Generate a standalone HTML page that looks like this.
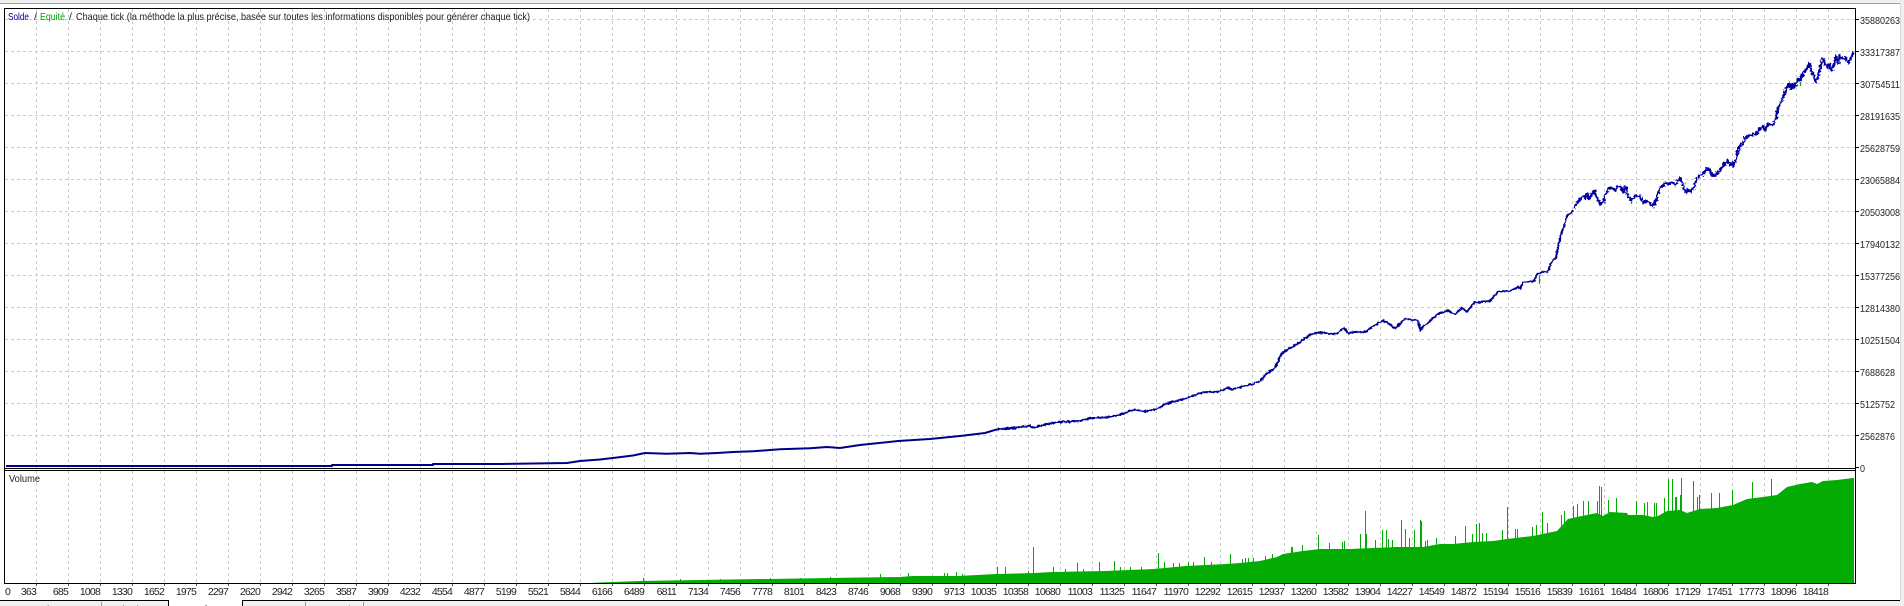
<!DOCTYPE html>
<html><head><meta charset="utf-8"><title>Graphique</title>
<style>
html,body{margin:0;padding:0;width:1904px;height:606px;overflow:hidden;background:#f0f0f0}
svg{display:block}
text{font-family:"Liberation Sans",sans-serif;font-size:10.5px;fill:#222}
</style></head><body>
<svg xmlns="http://www.w3.org/2000/svg" width="1904" height="606" viewBox="0 0 1904 606">
<defs>
<filter id="j1" filterUnits="userSpaceOnUse" x="0" y="0" width="1904" height="606" color-interpolation-filters="sRGB">
<feTurbulence type="fractalNoise" baseFrequency="0.35" numOctaves="2" seed="4" result="n"/>
<feDisplacementMap in="SourceGraphic" in2="n" scale="3" xChannelSelector="R" yChannelSelector="G"/>
</filter>
<filter id="j2" filterUnits="userSpaceOnUse" x="0" y="0" width="1904" height="606" color-interpolation-filters="sRGB">
<feTurbulence type="fractalNoise" baseFrequency="0.4" numOctaves="2" seed="9" result="n"/>
<feDisplacementMap in="SourceGraphic" in2="n" scale="5" xChannelSelector="R" yChannelSelector="G"/>
</filter>
</defs>
<rect x="0" y="0" width="1904" height="606" fill="#f0f0f0"/>
<rect x="0" y="4" width="1900" height="596" fill="#fff"/>
<rect x="0" y="3" width="1900" height="1" fill="#a0a0a0"/>
<rect x="1900" y="3" width="1" height="597" fill="#d8d8d8"/>

<!-- grid -->
<path shape-rendering="crispEdges" fill="none" stroke="#cacaca" stroke-dasharray="3 3" d="M5 19.5H1855M5 51.5H1855M5 83.5H1855M5 115.5H1855M5 147.5H1855M5 179.5H1855M5 211.5H1855M5 243.5H1855M5 275.5H1855M5 307.5H1855M5 339.5H1855M5 371.5H1855M5 403.5H1855M5 435.5H1855"/>
<path shape-rendering="crispEdges" fill="none" stroke="#cacaca" stroke-dasharray="3 3" d="M36.5 9V583M68.5 9V583M100.5 9V583M132.5 9V583M164.5 9V583M196.5 9V583M228.5 9V583M260.5 9V583M292.5 9V583M324.5 9V583M356.5 9V583M388.5 9V583M420.5 9V583M452.5 9V583M484.5 9V583M516.5 9V583M548.5 9V583M580.5 9V583M612.5 9V583M644.5 9V583M676.5 9V583M708.5 9V583M740.5 9V583M772.5 9V583M804.5 9V583M836.5 9V583M868.5 9V583M900.5 9V583M932.5 9V583M964.5 9V583M996.5 9V583M1028.5 9V583M1060.5 9V583M1092.5 9V583M1124.5 9V583M1156.5 9V583M1188.5 9V583M1220.5 9V583M1252.5 9V583M1284.5 9V583M1316.5 9V583M1348.5 9V583M1380.5 9V583M1412.5 9V583M1444.5 9V583M1476.5 9V583M1508.5 9V583M1540.5 9V583M1572.5 9V583M1604.5 9V583M1636.5 9V583M1668.5 9V583M1700.5 9V583M1732.5 9V583M1764.5 9V583M1796.5 9V583M1828.5 9V583"/>

<!-- volume area -->
<polygon fill="#03ab03" points="590,583 600,582.5 640,581 700,580 800,578.5 860,577.5 900,577 913,576 958,576 996,574 1034,573 1052,572 1105,571 1154,569 1186,566 1226,564 1240,563 1260,561 1277,557 1283,554 1303,551 1320,549 1340,549 1350,549 1373,548 1397,547 1423,547 1440,544 1453,544 1473,542 1493,541 1507,539 1533,536 1557,531 1568,519 1577,517 1597,513 1603,516 1610,512 1627,513 1628,515 1643,515 1653,517 1658,516 1667,511 1680,510 1687,513 1700,509 1717,508 1733,505 1747,499 1763,497 1777,495 1787,487 1800,484 1812,482 1817,484 1823,481 1837,480 1853,478 1854,478 1854,583"/>
<!-- volume spikes -->
<path shape-rendering="crispEdges" fill="none" stroke="#03ab03" d="M643.5 578V583M680.5 579V583M720.5 579V583M770.5 578V583M800.5 578V583M830.5 577V583M880.5 574V583
M908.5 573V583M944.5 573V583M947.5 573V583M956.5 572V583M962.5 574V583M997.5 567V583M1005.5 567V583M1028.5 571V583M1033.5 547V583M1053.5 567V583M1065.5 569V583M1077.5 563V583M1083.5 569V583M1099.5 562V583M1114.5 561V583M1120.5 567V583M1130.5 567V583M1141.5 567V583M1158.5 553V583M1164.5 562V583M1173.5 563V583M1179.5 563V583M1188.5 562V583M1193.5 562V583M1204.5 557V583M1211.5 562V583M1230.5 554V583
M1242.5 559V583M1245.5 558V583M1248.5 558V583M1253.5 558V583M1265.5 556V583M1272.5 554V583M1291.5 547V583M1292.5 547V583M1302.5 545V583M1318.5 535V583M1329.5 543V583M1342.5 542V583M1344.5 541V583M1360.5 534V583M1365.5 511V583M1366.5 534V583M1375.5 540V583M1382.5 530V583M1386.5 530V583M1388.5 539V583M1392.5 540V583M1401.5 520V583M1405.5 529V583M1409.5 538V583M1414.5 530V583M1420.5 520V583M1421.5 521V583M1425.5 541V583M1427.5 540V583M1436.5 538V583M1455.5 536V583M1465.5 526V583M1472.5 534V583M1476.5 524V583M1479.5 523V583M1482.5 533V583M1486.5 533V583M1502.5 530V583M1507.5 507V583M1515.5 529V583M1517.5 529V583M1532.5 527V583M1536.5 525V583M1542.5 512V583M1547.5 523V583M1561.5 515V583M1564.5 511V583M1573.5 506V583M1577.5 504V583M1583.5 501V583M1588.5 501V583M1597.5 501V583M1599.5 486V583M1601.5 487V583M1608.5 500V583M1616.5 498V583
M1636.5 501V583M1644.5 503V583M1647.5 502V583M1654.5 503V583M1656.5 503V583M1664.5 498V583M1668.5 479V583M1672.5 479V583M1675.5 497V583M1676.5 497V583M1680.5 495V583M1681.5 478V583M1693.5 481V583M1697.5 497V583M1699.5 495V583M1711.5 493V583M1719.5 493V583M1732.5 490V583M1752.5 482V583M1771.5 479V583"/>

<!-- equity glitches -->
<path fill="none" stroke="#1f9a1f" stroke-width="1.2" d="M1539.5 275V284M1631.5 198V204M1800.5 82V86"/>

<!-- balance curve -->
<polyline fill="none" stroke="#000088" stroke-width="2" stroke-linejoin="round" points="6,466 332,466 332,465 433,465 433,464 500,464 567,463 580,461 600,459.5 617,457.5 633,455.5 645,453 667,453.7 690,453 700,453.8 717,453 733,452 753,451.3 780,449.3 810,448.3 827,447 840,448 860,445 898,441 930,439 960,436 985,433 997,429.3"/>
<polyline filter="url(#j1)" fill="none" stroke="#00008f" stroke-width="2" stroke-linejoin="round" points="997,429.3 1003,428.7 1013,428 1030,425.7 1032,428 1047,424 1060,422 1080,421 1090,418.3 1107,417.3 1123,414 1133,409.7 1138,410 1142,411.7 1157,409.3 1165,404 1188,397.7 1203,392.3 1218,391.7 1228,388 1232,389.3 1253,384 1260,381 1268,372.3 1275,368.3 1280,356.7 1283.5,351.7 1290,348 1299,343 1308,336 1315,332.7 1325,333 1335,334.3 1344,328.3 1348,333 1357,331.7 1364,332.7 1370.5,328 1383,320.5 1388,323 1395,328.5 1405,318.7 1413,320 1418,320.7 1420.5,331 1422,328 1430,321 1438,314 1448,310.7 1455,314.3 1462,308 1467,311.7 1474,302.7 1480,302 1490,301 1498,291.7 1510,291 1518,287 1520,289 1523,282.3 1534,280.7 1537,274 1543,271.7 1547,272 1553,260 1556,258 1559,242 1565,223 1567,215.7 1573.6,211"/>
<polyline filter="url(#j2)" fill="none" stroke="#0000a0" stroke-width="2.4" stroke-linejoin="round" points="1574,208 1579,200 1583,196 1585,198 1587,194 1589,199 1594,191 1597,198 1600,204 1603,203 1605,195 1610,187 1615,190 1617,186 1621,187 1623,192 1626,186 1628,197 1632,200 1635,196 1640,196 1643,202 1647,201 1653,206 1655,203 1659,190 1665,183 1669,184 1672,182 1675,185 1680,177 1686,193 1688,189 1690,192 1694,187 1697,178 1703,174 1708,168 1713,176 1716,175 1723,166 1727,160 1730,165 1732,163 1734,166 1737,155 1739,147 1743,143 1747,136 1756,134 1762,126 1765,130 1768,124 1773,125 1776,119 1778,108 1783,98 1787,87 1789,83 1791,90 1792,84 1794,88 1798,79 1800,80 1803,74 1809,64 1816,82 1819,72 1823,59 1827,68 1829,64 1831,70 1833,68 1836,56 1838,64 1840,55 1843,59 1846,58 1848,63 1850,61 1853,52"/>

<!-- frames -->
<g shape-rendering="crispEdges" fill="#000">
<rect x="4" y="8" width="1852" height="1"/>
<rect x="4" y="8" width="1" height="576"/>
<rect x="1855" y="8" width="1" height="576"/>
<rect x="4" y="468" width="1852" height="1"/>
<rect x="4" y="470" width="1852" height="1"/>
<rect x="4" y="583" width="1852" height="1"/>
</g>
<rect x="5" y="469" width="1850" height="1" fill="#fff"/>
<!-- right ticks -->
<path shape-rendering="crispEdges" stroke="#000" d="M1856 19.5H1859M1856 51.5H1859M1856 83.5H1859M1856 115.5H1859M1856 147.5H1859M1856 179.5H1859M1856 211.5H1859M1856 243.5H1859M1856 275.5H1859M1856 307.5H1859M1856 339.5H1859M1856 371.5H1859M1856 403.5H1859M1856 435.5H1859M1856 467.5H1859"/>
<!-- bottom ticks -->
<path shape-rendering="crispEdges" stroke="#555" d="M36.5 584V586M68.5 584V586M100.5 584V586M132.5 584V586M164.5 584V586M196.5 584V586M228.5 584V586M260.5 584V586M292.5 584V586M324.5 584V586M356.5 584V586M388.5 584V586M420.5 584V586M452.5 584V586M484.5 584V586M516.5 584V586M548.5 584V586M580.5 584V586M612.5 584V586M644.5 584V586M676.5 584V586M708.5 584V586M740.5 584V586M772.5 584V586M804.5 584V586M836.5 584V586M868.5 584V586M900.5 584V586M932.5 584V586M964.5 584V586M996.5 584V586M1028.5 584V586M1060.5 584V586M1092.5 584V586M1124.5 584V586M1156.5 584V586M1188.5 584V586M1220.5 584V586M1252.5 584V586M1284.5 584V586M1316.5 584V586M1348.5 584V586M1380.5 584V586M1412.5 584V586M1444.5 584V586M1476.5 584V586M1508.5 584V586M1540.5 584V586M1572.5 584V586M1604.5 584V586M1636.5 584V586M1668.5 584V586M1700.5 584V586M1732.5 584V586M1764.5 584V586M1796.5 584V586M1828.5 584V586"/>

<!-- header text -->
<text x="8" y="20" textLength="21" lengthAdjust="spacingAndGlyphs" style="fill:#00008b">Solde</text>
<text x="34" y="20">/</text>
<text x="40" y="20" textLength="25" lengthAdjust="spacingAndGlyphs" style="fill:#00a000">Equité</text>
<text x="69" y="20">/</text>
<text x="76" y="20" textLength="454" lengthAdjust="spacingAndGlyphs">Chaque tick (la méthode la plus précise, basée sur toutes les informations disponibles pour générer chaque tick)</text>
<text x="9" y="482" textLength="31" lengthAdjust="spacingAndGlyphs">Volume</text>

<!-- right axis -->
<g>
<text x="1860" y="24" textLength="40" lengthAdjust="spacingAndGlyphs">35880263</text>
<text x="1860" y="56" textLength="40" lengthAdjust="spacingAndGlyphs">33317387</text>
<text x="1860" y="88" textLength="40" lengthAdjust="spacingAndGlyphs">30754511</text>
<text x="1860" y="120" textLength="40" lengthAdjust="spacingAndGlyphs">28191635</text>
<text x="1860" y="152" textLength="40" lengthAdjust="spacingAndGlyphs">25628759</text>
<text x="1860" y="184" textLength="40" lengthAdjust="spacingAndGlyphs">23065884</text>
<text x="1860" y="216" textLength="40" lengthAdjust="spacingAndGlyphs">20503008</text>
<text x="1860" y="248" textLength="40" lengthAdjust="spacingAndGlyphs">17940132</text>
<text x="1860" y="280" textLength="40" lengthAdjust="spacingAndGlyphs">15377256</text>
<text x="1860" y="312" textLength="40" lengthAdjust="spacingAndGlyphs">12814380</text>
<text x="1860" y="344" textLength="40" lengthAdjust="spacingAndGlyphs">10251504</text>
<text x="1860" y="376" textLength="35" lengthAdjust="spacingAndGlyphs">7688628</text>
<text x="1860" y="408" textLength="35" lengthAdjust="spacingAndGlyphs">5125752</text>
<text x="1860" y="440" textLength="35" lengthAdjust="spacingAndGlyphs">2562876</text>
<text x="1860" y="472" textLength="5" lengthAdjust="spacingAndGlyphs">0</text>
</g>

<!-- bottom axis -->
<g text-anchor="end" style="letter-spacing:-.8px">
<text x="10" y="595">0</text>
<text x="36" y="595">363</text><text x="68" y="595">685</text><text x="100" y="595">1008</text><text x="132" y="595">1330</text><text x="164" y="595">1652</text><text x="196" y="595">1975</text><text x="228" y="595">2297</text><text x="260" y="595">2620</text><text x="292" y="595">2942</text><text x="324" y="595">3265</text><text x="356" y="595">3587</text><text x="388" y="595">3909</text><text x="420" y="595">4232</text><text x="452" y="595">4554</text><text x="484" y="595">4877</text><text x="516" y="595">5199</text><text x="548" y="595">5521</text><text x="580" y="595">5844</text><text x="612" y="595">6166</text><text x="644" y="595">6489</text><text x="676" y="595">6811</text><text x="708" y="595">7134</text><text x="740" y="595">7456</text><text x="772" y="595">7778</text><text x="804" y="595">8101</text><text x="836" y="595">8423</text><text x="868" y="595">8746</text><text x="900" y="595">9068</text><text x="932" y="595">9390</text><text x="964" y="595">9713</text><text x="996" y="595">10035</text><text x="1028" y="595">10358</text><text x="1060" y="595">10680</text><text x="1092" y="595">11003</text><text x="1124" y="595">11325</text><text x="1156" y="595">11647</text><text x="1188" y="595">11970</text><text x="1220" y="595">12292</text><text x="1252" y="595">12615</text><text x="1284" y="595">12937</text><text x="1316" y="595">13260</text><text x="1348" y="595">13582</text><text x="1380" y="595">13904</text><text x="1412" y="595">14227</text><text x="1444" y="595">14549</text><text x="1476" y="595">14872</text><text x="1508" y="595">15194</text><text x="1540" y="595">15516</text><text x="1572" y="595">15839</text><text x="1604" y="595">16161</text><text x="1636" y="595">16484</text><text x="1668" y="595">16806</text><text x="1700" y="595">17129</text><text x="1732" y="595">17451</text><text x="1764" y="595">17773</text><text x="1796" y="595">18096</text><text x="1828" y="595">18418</text>
</g>

<!-- tabs -->
<rect x="169" y="600" width="73" height="6" fill="#fff"/>
<g shape-rendering="crispEdges" fill="#000">
<rect x="0" y="600" width="169" height="1"/>
<rect x="168" y="600" width="1" height="6"/>
<rect x="242" y="600" width="1658" height="1"/>
<rect x="242" y="600" width="1" height="6"/>
</g>
<rect x="101" y="602" width="1" height="4" fill="#999"/>
<rect x="305" y="602" width="1" height="4" fill="#999"/>
<rect x="363" y="602" width="1" height="4" fill="#999"/>
<text x="15" y="613" style="fill:#444">Paramètres</text>
<text x="112" y="613" style="fill:#444">Résultats</text>
<text x="180" y="613" style="font-weight:bold;fill:#000">Graphe</text>
<text x="253" y="613" style="fill:#444">Rapport</text>
<text x="316" y="613" style="fill:#444">Journal</text>
</svg>
</body></html>
